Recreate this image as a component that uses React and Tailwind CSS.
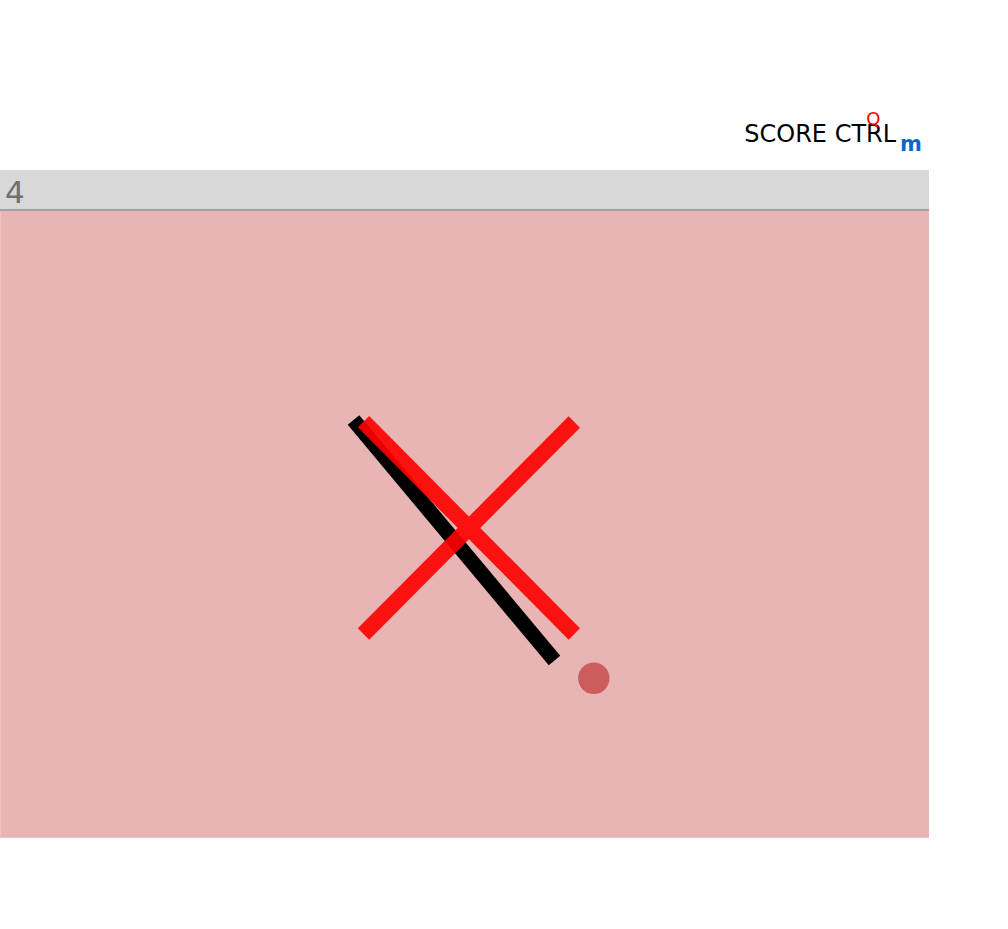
import React from "react";

export default function App() {
  return (
    <div className="w-[929px] bg-white" style={{ fontFamily: "'DejaVu Sans', Verdana, sans-serif" }}>
      <div className="h-[170px] flex justify-end items-start pt-[120px] pr-[7px]">
        <span className="relative text-[24px] leading-[28px] text-black">
          SCORE CTRL
          <span className="absolute left-[122px] -top-[10px] text-[18px] leading-[18px] text-[#ff0000]">Q</span>
        </span>
        <span className="ml-[4px] text-[21px] leading-[28px] font-bold text-[#0a66cc] self-start pt-[10px]">m</span>
      </div>

      <div className="h-[41px] bg-[#d8d8d8] border-b-2 border-[#a0a0a0] pl-[5px] pt-[6px] text-[31px] leading-[32px] text-[#707070]">
        4
      </div>

      <div className="h-[627px] bg-[#e8b4b4] border-l border-b border-[#ecc3c3]">
        <svg width="928" height="626" viewBox="0 0 928 626" className="block">
          <line x1="352.5" y1="209" x2="553.5" y2="449.5" stroke="#000" strokeWidth="15" />
          <g opacity="0.9">
            <line x1="362.5" y1="210.7" x2="573.3" y2="423" stroke="#ff0000" strokeWidth="16" />
            <line x1="573.3" y1="211" x2="362.5" y2="423" stroke="#ff0000" strokeWidth="16" />
          </g>
          <circle cx="592.8" cy="467.3" r="15.7" fill="#cd5c5c" />
        </svg>
      </div>
    </div>
  );
}
